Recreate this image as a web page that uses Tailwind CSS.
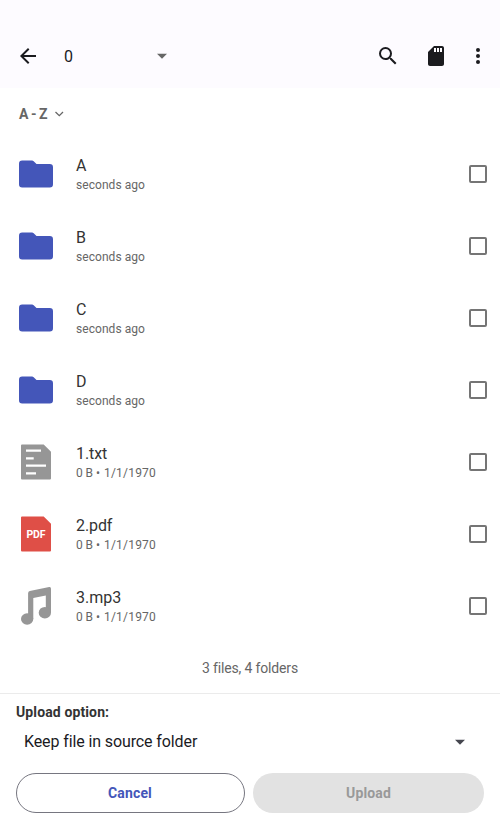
<!DOCTYPE html>
<html lang="en">
<head>
<meta charset="utf-8">
<title>Upload files</title>
<script src="https://cdn.jsdelivr.net/npm/@tailwindcss/browser@4"></script>
</head>
<body class="bg-white font-[Roboto,sans-serif]">
<svg class="hidden">
  <symbol id="folder" viewBox="0 0 34 28"><path d="M3.200.5H13q1 0 1.700.7L17.500 4h13.300Q34 4 34 7.200v17.100q0 3.200-3.200 3.200H3.200Q0 27.500 0 24.300V3.700Q0 .5 3.200.5z"/></symbol>
</svg>
<div class="flex h-[833px] w-[500px] flex-col overflow-hidden">
  <header class="flex h-[88px] shrink-0 items-end bg-[#fdfbff] pb-5 text-[#1b1b1f]">
    <svg class="ml-4 size-6" viewBox="0 0 24 24" fill="currentColor"><path d="M20 11H7.830l5.590-5.590L12 4l-8 8 8 8 1.410-1.410L7.830 13H20v-2z"/></svg>
    <span class="ml-6 w-[86px] text-base leading-[22px]">0</span>
    <svg class="size-6" viewBox="0 0 24 24" fill="#666"><path d="M7 9.700h10l-5 5z"/></svg>
    <svg class="ml-[202px] size-6" viewBox="0 0 24 24" fill="currentColor"><path d="M15.500 14h-.79l-.28-.27A6.470 6.470 0 0 0 16 9.500 6.500 6.500 0 1 0 9.500 16c1.610 0 3.090-.59 4.230-1.570l.27.28v.79l5 4.990L20.490 19l-4.990-5zm-6 0C7.010 14 5 11.990 5 9.500S7.010 5 9.500 5 14 7.010 14 9.500 11.990 14 9.500 14z"/></svg>
    <svg class="ml-6 size-6" viewBox="0 0 24 24" fill="currentColor"><path d="M18 2h-8L4.020 8 4 20c0 1.100.9 2 2 2h12c1.100 0 2-.9 2-2V4c0-1.100-.9-2-2-2zm-6 6h-2V4h2v4zm3 0h-2V4h2v4zm3 0h-2V4h2v4z"/></svg>
    <svg class="ml-[18px] size-6" viewBox="0 0 24 24" fill="currentColor"><circle cx="12" cy="6" r="2"/><circle cx="12" cy="12" r="2"/><circle cx="12" cy="18" r="2"/></svg>
  </header>

  <div class="flex h-[50px] shrink-0 items-center gap-[6px] pl-[19px] pt-[2px] text-[#666]">
    <span class="text-sm font-bold tracking-[0.300px] [word-spacing:-1.500px]">A - Z</span>
    <svg class="mt-[-1px] h-2 w-[10px]" viewBox="0 0 10 8" fill="none" stroke="currentColor" stroke-width="1.300"><path d="M1.500 2l3.800 3.700L9 2"/></svg>
  </div>

  <ul class="shrink-0 text-[#333]">
    <li class="flex h-[72px] items-center pr-[13px]">
      <div class="flex w-[72px] justify-center"><svg class="h-7 w-[34px]" fill="#4456b9"><use href="#folder"/></svg></div>
      <div class="ml-1 flex-1 pt-[2px]"><div class="text-base leading-5">A</div><div class="text-xs leading-[18px] tracking-[0.060px] text-[#666]">seconds ago</div></div>
      <span class="size-[18px] rounded-[2px] border-2 border-[#757575]"></span>
    </li>
    <li class="flex h-[72px] items-center pr-[13px]">
      <div class="flex w-[72px] justify-center"><svg class="h-7 w-[34px]" fill="#4456b9"><use href="#folder"/></svg></div>
      <div class="ml-1 flex-1 pt-[2px]"><div class="text-base leading-5">B</div><div class="text-xs leading-[18px] tracking-[0.060px] text-[#666]">seconds ago</div></div>
      <span class="size-[18px] rounded-[2px] border-2 border-[#757575]"></span>
    </li>
    <li class="flex h-[72px] items-center pr-[13px]">
      <div class="flex w-[72px] justify-center"><svg class="h-7 w-[34px]" fill="#4456b9"><use href="#folder"/></svg></div>
      <div class="ml-1 flex-1 pt-[2px]"><div class="text-base leading-5">C</div><div class="text-xs leading-[18px] tracking-[0.060px] text-[#666]">seconds ago</div></div>
      <span class="size-[18px] rounded-[2px] border-2 border-[#757575]"></span>
    </li>
    <li class="flex h-[72px] items-center pr-[13px]">
      <div class="flex w-[72px] justify-center"><svg class="h-7 w-[34px]" fill="#4456b9"><use href="#folder"/></svg></div>
      <div class="ml-1 flex-1 pt-[2px]"><div class="text-base leading-5">D</div><div class="text-xs leading-[18px] tracking-[0.060px] text-[#666]">seconds ago</div></div>
      <span class="size-[18px] rounded-[2px] border-2 border-[#757575]"></span>
    </li>
    <li class="flex h-[72px] items-center pr-[13px]">
      <div class="flex w-[72px] justify-center">
        <svg class="h-9 w-[30px]" viewBox="0 0 30 36"><path d="M1 .4h21.700L30 7.700v26.800a1 1 0 0 1-1 1H1a1 1 0 0 1-1-1V1.400a1 1 0 0 1 1-1z" fill="#969696"/><path d="M5 6.700h15M5 14.300h7.700M5 21.700h20M5 29.300h10" stroke="#fff" stroke-width="2.300"/></svg>
      </div>
      <div class="ml-1 flex-1 pt-[2px]"><div class="text-base leading-5 tracking-[-0.100px]">1.txt</div><div class="flex text-xs leading-[18px] tracking-[0.200px] text-[#666]"><span class="w-[20px] whitespace-nowrap [word-spacing:-0.500px]">0 B</span><span class="w-[8px]">•</span><span>1/1/1970</span></div></div>
      <span class="size-[18px] rounded-[2px] border-2 border-[#757575]"></span>
    </li>
    <li class="flex h-[72px] items-center pr-[13px]">
      <div class="flex w-[72px] justify-center">
        <svg class="h-9 w-[30px]" viewBox="0 0 30 36"><path d="M1 .4h21.700L30 7.700v26.800a1 1 0 0 1-1 1H1a1 1 0 0 1-1-1V1.400a1 1 0 0 1 1-1z" fill="#df4f47"/><text x="15" y="21.800" text-anchor="middle" textLength="19" class="text-[10.500px] font-bold" fill="#fff">PDF</text></svg>
      </div>
      <div class="ml-1 flex-1 pt-[2px]"><div class="text-base leading-5 tracking-[-0.100px]">2.pdf</div><div class="flex text-xs leading-[18px] tracking-[0.200px] text-[#666]"><span class="w-[20px] whitespace-nowrap [word-spacing:-0.500px]">0 B</span><span class="w-[8px]">•</span><span>1/1/1970</span></div></div>
      <span class="size-[18px] rounded-[2px] border-2 border-[#757575]"></span>
    </li>
    <li class="flex h-[72px] items-center pr-[13px]">
      <div class="flex w-[72px] justify-center">
        <svg class="h-[38px] w-[30px]" viewBox="0 0 30 38" fill="#969696"><path d="M8.800 4 28.200.1Q30-.2 30 1.700v24h-5.200V8.600L12.300 11v21H7.100V6.200Q7.100 4.400 8.800 4z"/><ellipse cx="6.150" cy="32" rx="6.150" ry="5.700"/><ellipse cx="23.850" cy="25.700" rx="6.150" ry="5.800"/></svg>
      </div>
      <div class="ml-1 flex-1 pt-[2px]"><div class="text-base leading-5">3.mp3</div><div class="flex text-xs leading-[18px] tracking-[0.200px] text-[#666]"><span class="w-[20px] whitespace-nowrap [word-spacing:-0.500px]">0 B</span><span class="w-[8px]">•</span><span>1/1/1970</span></div></div>
      <span class="size-[18px] rounded-[2px] border-2 border-[#757575]"></span>
    </li>
  </ul>
  <p class="h-[51px] shrink-0 pt-4 text-center text-sm leading-5 tracking-[-0.150px] text-[#666]">3 files, 4 folders</p>

  <footer class="flex-1 border-t border-[#ebebeb] px-4 pt-2">
    <div class="text-sm font-bold leading-5 tracking-[0.120px] text-[#333]">Upload option:</div>
    <div class="mt-px flex h-[38px] items-center justify-between pl-2 pr-3">
      <span class="text-base tracking-[-0.110px] text-[#1b1b1f]">Keep file in source folder</span>
      <svg class="mt-[-1px] size-6" viewBox="0 0 24 24" fill="#45464f"><path d="M7 9.700h10l-5 5z"/></svg>
    </div>
    <div class="mt-3 flex gap-2">
      <button class="h-10 w-[229px] rounded-full border border-[#767680] pr-px text-sm font-bold tracking-[0.150px] text-[#4456b9]">Cancel</button>
      <button class="h-10 flex-1 rounded-full bg-[#e2e2e2] text-sm font-bold tracking-[0.150px] text-[#999]">Upload</button>
    </div>
  </footer>
</div>
</body>
</html>
